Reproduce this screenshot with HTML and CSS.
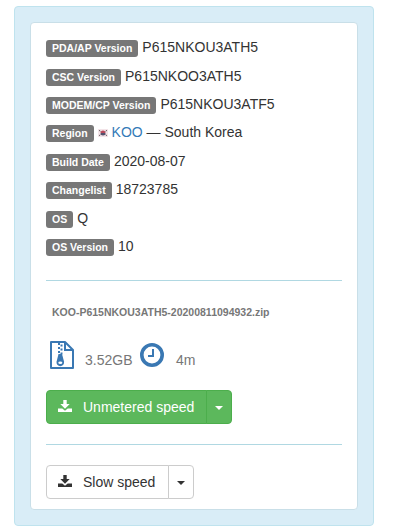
FILE: index.html
```html
<!DOCTYPE html>
<html lang="en">
<head>
<meta charset="utf-8">
<title>Firmware</title>
<link rel="stylesheet" href="styles.css">
</head>
<body>
<main class="well">
<section class="panel">
<ul class="info">
<li><span class="label">PDA/AP Version</span><span>P615NKOU3ATH5</span></li>
<li><span class="label">CSC Version</span><span>P615NKOO3ATH5</span></li>
<li><span class="label">MODEM/CP Version</span><span>P615NKOU3ATF5</span></li>
<li><span class="label">Region</span><svg class="flag" viewBox="0 0 12 10"><rect x="1" y="1" width="10" height="8" fill="#f3e4e8"/><path d="M3.500 5a2.500 2.500 0 0 1 5 0z" fill="#b8485a"/><path d="M3.500 5a2.500 2.500 0 0 0 5 0z" fill="#53516d"/><path d="M2 2.300l1.500 1M2 7.700l1.500-1M10 2.300l-1.500 1M10 7.700l-1.500-1" stroke="#665b60"/></svg><span><a href="#">KOO</a> — South Korea</span></li>
<li><span class="label">Build Date</span><span>2020-08-07</span></li>
<li><span class="label">Changelist</span><span>18723785</span></li>
<li><span class="label">OS</span><span>Q</span></li>
<li><span class="label">OS Version</span><span>10</span></li>
</ul>
<hr>
<div class="filename">KOO-P615NKOU3ATH5-20200811094932.zip</div>
<div class="stats">
<svg class="zip" viewBox="0 0 24 28" fill="none" stroke="#3a78b3" stroke-width="2"><path d="M1 1h14l8 8v18H1z" stroke-linejoin="round"/><path d="M15 1v8h8"/><path d="M9 2v11M11.500 3.500v10" stroke-dasharray="2 2"/><path d="M8.500 13h3.500l2 7.500a3.800 3.800 0 1 1-7.400 0z" fill="#3a78b3" stroke="none"/><ellipse cx="10.300" cy="21.700" rx="2" ry="1.300" fill="#fff" stroke="none"/></svg>
<span class="size">3.52GB</span>
<svg class="clock" viewBox="0 0 24 24" fill="none" stroke="#3a78b3"><circle cx="12" cy="12" r="10.200" stroke-width="3.600"/><path d="M13 6v7H8" stroke-width="2"/></svg>
<span class="time">4m</span>
</div>
<div class="group green">
<button class="main"><svg class="dl" viewBox="0 0 14 13"><path d="M5.300 0h3.400v4h3L7 8.700 2.300 4h3zM0 8.500h4.300L7 10.700l2.700-2.200H14V12H0z"/></svg>Unmetered speed</button><button class="toggle" aria-label="More"><i></i></button>
</div>
<hr>
<div class="group plain">
<button class="main"><svg class="dl" viewBox="0 0 14 13"><path d="M5.300 0h3.400v4h3L7 8.700 2.300 4h3zM0 8.500h4.300L7 10.700l2.700-2.200H14V12H0z"/></svg>Slow speed</button><button class="toggle" aria-label="More"><i></i></button>
</div>
</section>
</main>
</body>
</html>
```
FILE: styles.css
```css
* { box-sizing: border-box; }
body {
  margin: 0;
  padding: 6px 0 0 14px;
  height: 526px;
  overflow: hidden;
  background: #fff;
  color: #333;
  font: 14px/20px "Liberation Sans", Arial, sans-serif;
}
.well {
  width: 360px;
  height: 520px;
  padding: 15px;
  border: 1px solid #bfe3ee;
  border-radius: 4px;
  background: #d9edf7;
}
.panel {
  width: 328px;
  height: 488px;
  padding: 10px 15px 0;
  border: 1px solid #c9dfe8;
  border-radius: 4px;
  background: #fff;
}
.info { list-style: none; margin: 0; padding: 0; }
.info li { display: flex; align-items: center; height: 28.42px; }
.info li > span:not(.label) { white-space: nowrap; }
.label {
  height: 17px;
  margin: 3px 4px 0 0;
  padding: 0 6px;
  border-radius: 3px;
  background: #777;
  color: #fff;
  font-size: 10.500px;
  font-weight: bold;
  line-height: 17px;
  white-space: nowrap;
}
.flag { width: 12px; height: 10px; margin: 1px 3px 0 -1px; }
a { color: #337ab7; text-decoration: none; }
hr { height: 1px; margin: 20px 0; border: 0; background: #b0d8e2; }
.filename {
  height: 22px;
  padding-left: 6px;
  color: #777;
  font-size: 10.500px;
  font-weight: bold;
  line-height: 22px;
}
.stats { display: flex; height: 48px; padding: 18px 0 0 4px; color: #777; }
.zip { width: 24px; height: 28px; }
.size { width: 55px; margin: 9px 0 0 11px; }
.clock { width: 24px; height: 24px; margin-top: 2px; }
.time { margin: 9px 0 0 12px; }
.group { display: flex; height: 34px; }
.green { margin-top: 19px; }
button {
  display: flex;
  align-items: center;
  height: 34px;
  border: 1px solid #ccc;
  background: #fff;
  color: #333;
  font: inherit;
  white-space: nowrap;
}
.main { padding: 0 12px 0 11px; border-radius: 4px 0 0 4px; }
.plain .main { padding-right: 13px; }
.toggle { width: 26px; margin-left: -1px; padding: 2px 0 0; justify-content: center; border-radius: 0 4px 4px 0; }
.toggle i { border: 4px solid transparent; border-top-color: currentColor; border-bottom: 0; }
.green button { border-color: #4cae4c; background: #5cb85c; color: #fff; }
.dl { width: 14px; height: 13px; margin: 0 11px 2px 0; fill: currentColor; }
```
